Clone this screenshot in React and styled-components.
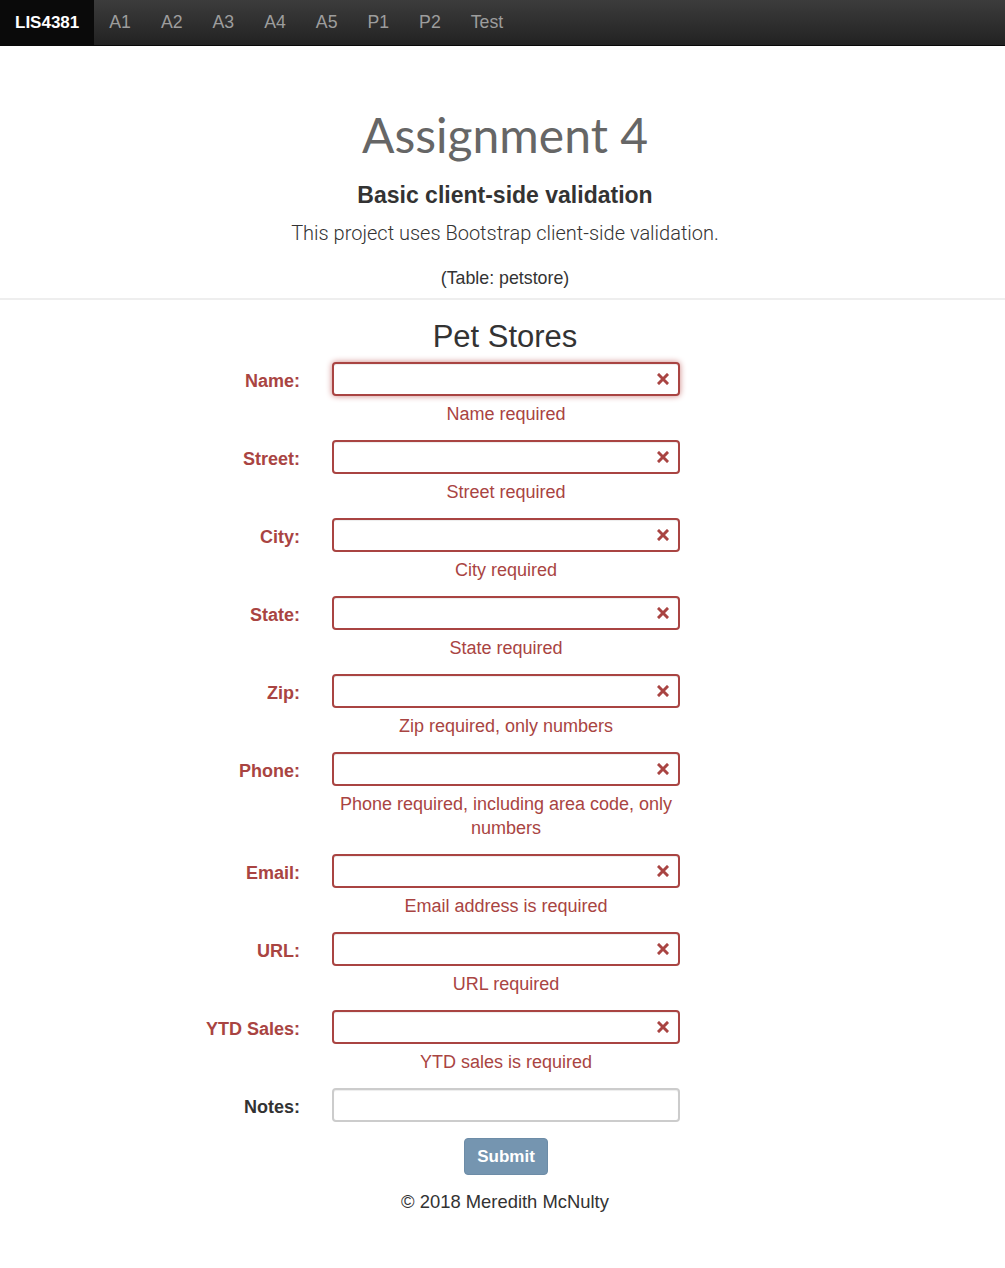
import styled, { createGlobalStyle } from 'styled-components';

const GlobalStyle = createGlobalStyle`
  html, body {
    margin: 0;
    padding: 0;
    background: #ffffff;
  }
  body {
    font-family: 'Liberation Sans', Arial, sans-serif;
    color: #333333;
  }
`;

const Navbar = styled.nav`
  height: 46px;
  display: flex;
  align-items: stretch;
  background: linear-gradient(to bottom, #3c3c3c 0%, #222222 100%);
  border-bottom: 1px solid #080808;
  box-sizing: border-box;
`;

const Brand = styled.a`
  display: flex;
  align-items: center;
  padding: 0 15px;
  background: #0a0a0a;
  color: #ffffff;
  font-size: 17px;
  font-weight: 700;
  text-decoration: none;
`;

const NavLink = styled.a`
  display: flex;
  align-items: center;
  padding: 0 15px;
  color: #9d9d9d;
  font-size: 17.7px;
  text-decoration: none;
`;

/* the original page centres on x=505, a few px right of the viewport middle */
const Centered = styled.div`
  text-align: center;
  padding-left: 5px;
`;

const Header = styled(Centered)`
  padding-top: 58px;
`;

const Title = styled.h1`
  margin: 0;
  font-family: Lato, 'Open Sans', sans-serif;
  font-weight: 400;
  font-size: 48px;
  line-height: 62px;
  color: #666666;
`;

const Subtitle = styled.h4`
  margin: 14px 0 0;
  font-size: 23px;
  line-height: 30px;
  font-weight: 700;
  color: #333333;
`;

const Lead = styled.p`
  margin: 9px 0 0;
  font-family: Roboto, 'Liberation Sans', sans-serif;
  font-weight: 300;
  font-size: 20px;
  line-height: 28px;
  color: #333333;
`;

const TableNote = styled.p`
  margin: 19px 0 0;
  font-size: 17.8px;
  line-height: 24px;
`;

const Rule = styled.hr`
  margin: 8px 0 0;
  border: 0;
  border-top: 2px solid #eeeeee;
`;

const FormTitle = styled.h2`
  margin: 19px 0 7px;
  padding-left: 5px;
  text-align: center;
  font-size: 31px;
  line-height: 36px;
  font-weight: 400;
  color: #333333;
`;

const Form = styled.form`
  display: grid;
  grid-template-columns: 300px 348px;
  column-gap: 32px;
  align-items: start;
`;

const Label = styled.label`
  box-sizing: border-box;
  height: 34px;
  padding-top: 4px;
  display: flex;
  align-items: center;
  justify-content: flex-end;
  font-size: 18px;
  font-weight: 700;
  color: ${(p) => (p.$error ? '#a94442' : '#333333')};
`;

const Field = styled.div`
  margin-bottom: 14px;
`;

const InputWrap = styled.div`
  position: relative;
  height: 34px;
`;

const Input = styled.input`
  box-sizing: border-box;
  width: 100%;
  height: 34px;
  padding: 6px 12px;
  border-radius: 4px;
  border: 2px solid ${(p) => (p.$error ? '#a94442' : '#cccccc')};
  box-shadow: ${(p) =>
    p.$focus
      ? 'inset 0 1px 1px rgba(0,0,0,.075), 0 0 6px #ce8483'
      : 'inset 0 1px 1px rgba(0,0,0,.075)'};
  outline: none;
  font-size: 16px;
  background: #ffffff;
`;

const Feedback = styled.span`
  position: absolute;
  right: 11px;
  top: 11px;
  width: 12px;
  height: 12px;
  display: flex;
`;

const Help = styled.div`
  margin-top: 6px;
  text-align: center;
  font-size: 18px;
  line-height: 24px;
  color: #a94442;
`;

const Actions = styled.div`
  grid-column: 2;
  display: flex;
  justify-content: center;
  margin-top: 2px;
`;

const Button = styled.button`
  width: 84px;
  height: 37px;
  border: 1px solid #6d8ca7;
  border-radius: 4px;
  background: #7595b0;
  color: #ffffff;
  font-family: 'Liberation Sans', Arial, sans-serif;
  font-size: 17px;
  font-weight: 700;
  cursor: not-allowed;
`;

const Footer = styled(Centered)`
  margin-top: 15px;
  font-size: 18.4px;
  line-height: 24px;
  color: #333333;
`;

const Cross = () => (
  <svg width="12" height="12" viewBox="0 0 12 12">
    <path d="M2 2 L10 10 M10 2 L2 10" stroke="#a94442" strokeWidth="3" strokeLinecap="square" />
  </svg>
);

const fields = [
  { label: 'Name', help: 'Name required', focus: true },
  { label: 'Street', help: 'Street required' },
  { label: 'City', help: 'City required' },
  { label: 'State', help: 'State required' },
  { label: 'Zip', help: 'Zip required, only numbers' },
  { label: 'Phone', help: 'Phone required, including area code, only numbers' },
  { label: 'Email', help: 'Email address is required' },
  { label: 'URL', help: 'URL required' },
  { label: 'YTD Sales', help: 'YTD sales is required' },
];

const navItems = ['A1', 'A2', 'A3', 'A4', 'A5', 'P1', 'P2', 'Test'];

export default function App() {
  return (
    <>
      <GlobalStyle />
      <Navbar>
        <Brand href="#">LIS4381</Brand>
        {navItems.map((n) => (
          <NavLink key={n} href="#">
            {n}
          </NavLink>
        ))}
      </Navbar>
      <Header as="header">
        <Title>Assignment 4</Title>
        <Subtitle>Basic client-side validation</Subtitle>
        <Lead>This project uses Bootstrap client-side validation.</Lead>
        <TableNote>(Table: petstore)</TableNote>
      </Header>
      <Rule />
      <FormTitle>Pet Stores</FormTitle>
      <Form onSubmit={(e) => e.preventDefault()}>
        {fields.flatMap((f) => [
          <Label key={f.label + '-l'} $error>
            {f.label}:
          </Label>,
          <Field key={f.label + '-f'}>
            <InputWrap>
              <Input $error $focus={f.focus} />
              <Feedback>
                <Cross />
              </Feedback>
            </InputWrap>
            <Help>{f.help}</Help>
          </Field>,
        ])}
        <Label>Notes:</Label>
        <Field>
          <InputWrap>
            <Input />
          </InputWrap>
        </Field>
        <Actions>
          <Button type="submit" disabled>
            Submit
          </Button>
        </Actions>
      </Form>
      <Footer as="footer">© 2018 Meredith McNulty</Footer>
    </>
  );
}
